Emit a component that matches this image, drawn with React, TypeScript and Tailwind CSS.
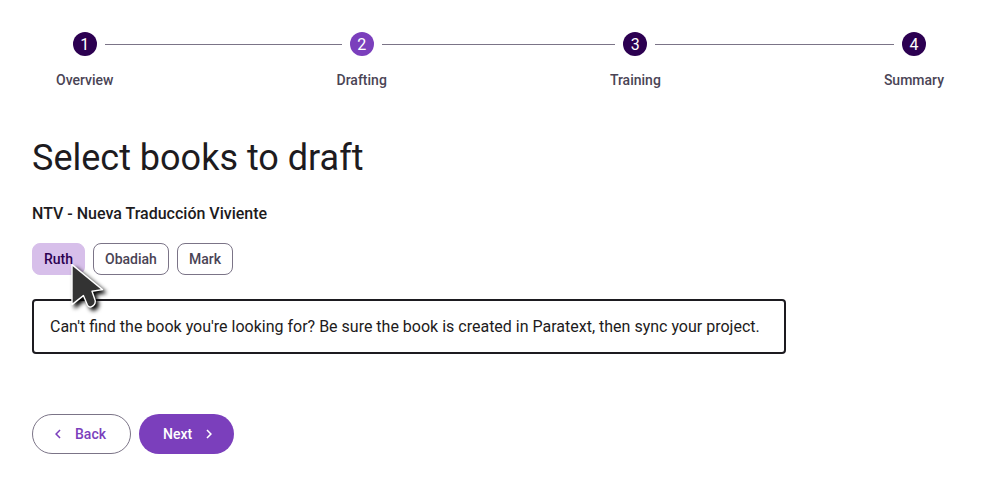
import { Fragment, useState } from "react";
import clsx from "clsx";

const steps = ["Overview", "Drafting", "Training", "Summary"];
const books = ["Ruth", "Obadiah", "Mark"];

function Stepper({ current }: { current: number }) {
  return (
    <ol className="flex items-start">
      {steps.map((label, i) => (
        <Fragment key={label}>
          {i > 0 && (
            <li aria-hidden="true" className="flex h-6 flex-1 items-center">
              <span className="h-px w-full bg-[#7b7487]" />
            </li>
          )}
          <li
            className="flex flex-col items-center gap-3.5"
            aria-current={i === current ? "step" : undefined}
          >
            <div className="flex w-full items-center gap-2">
              <span className={clsx("h-px flex-1", i > 0 && "bg-[#7b7487]")} />
              <span
                className={clsx(
                  "flex size-6 items-center justify-center rounded-full pt-0.5 text-base leading-6 text-white",
                  i === current ? "bg-[#7b3fbc]" : "bg-[#2c0051]",
                )}
              >
                {i + 1}
              </span>
              <span
                className={clsx("h-px flex-1", i < steps.length - 1 && "bg-[#7b7487]")}
              />
            </div>
            <span className="px-6 text-sm font-medium text-[#4a4455]">{label}</span>
          </li>
        </Fragment>
      ))}
    </ol>
  );
}

function Pointer() {
  return (
    <svg
      className="pointer-events-none absolute top-5 left-9 z-10 h-14 w-12 drop-shadow-[3px_3px_2px_rgba(0,0,0,1)]"
      viewBox="0 0 48 56"
      fill="none"
      aria-hidden="true"
    >
      <path
        d="M4 1.6 L34.5 26.6 L24 28.2 L27.2 37.5 Q27.8 42 23.2 43.8 Q20.8 44.8 19.4 42 L15.4 32.6 L4 41.6 Z"
        fill="#333333"
        stroke="#ffffff"
        strokeWidth="1.4"
        strokeLinejoin="round"
      />
    </svg>
  );
}

export default function App() {
  const [selected, setSelected] = useState(["Ruth"]);
  const toggle = (book: string) =>
    setSelected((prev) =>
      prev.includes(book) ? prev.filter((b) => b !== book) : [...prev, book],
    );

  return (
    <main className="bg-white p-8 font-['Roboto',sans-serif] text-[#1d1b20]">
      <Stepper current={1} />

      <h1 className="mt-11 text-4xl leading-[48px]">Select books to draft</h1>
      <h2 className="mt-5 text-base leading-6 font-medium">NTV - Nueva Traducción Viviente</h2>

      <div className="mt-[17px] flex gap-2">
        {books.map((book, i) => {
          const on = selected.includes(book);
          return (
            <div key={book} className="relative">
              <button
                type="button"
                aria-pressed={on}
                onClick={() => toggle(book)}
                className={clsx(
                  "h-8 rounded-lg border px-[11px] text-sm font-medium",
                  on
                    ? "border-[#d7bfea] bg-[#d7bfea] text-[#2c0051]"
                    : "border-[#7b7487] text-[#4a4455]",
                )}
              >
                {book}
              </button>
              {i === 0 && <Pointer />}
            </div>
          );
        })}
      </div>

      <p className="mt-6 w-fit rounded border-2 border-[#1d1b20] py-[13px] pr-6 pl-4 text-base leading-[25px]">
        Can't find the book you're looking for? Be sure the book is created in Paratext, then sync
        your project.
      </p>

      <div className="mt-[60px] flex gap-2">
        <button
          type="button"
          className="flex h-10 items-center gap-2 rounded-full border border-[#7b7487] pr-6 pl-4 text-sm font-medium text-[#7b3fbc]"
        >
          <svg className="size-[18px]" viewBox="0 0 24 24" fill="currentColor" aria-hidden="true">
            <path d="M15.41 7.41 14 6l-6 6 6 6 1.41-1.41L10.83 12z" />
          </svg>
          Back
        </button>
        <button
          type="button"
          className="flex h-10 items-center gap-2 rounded-full bg-[#7b3fbc] pr-4 pl-6 text-sm font-medium text-white"
        >
          Next
          <svg className="size-[18px]" viewBox="0 0 24 24" fill="currentColor" aria-hidden="true">
            <path d="M10 6 8.59 7.41 13.17 12l-4.58 4.59L10 18l6-6z" />
          </svg>
        </button>
      </div>
    </main>
  );
}
